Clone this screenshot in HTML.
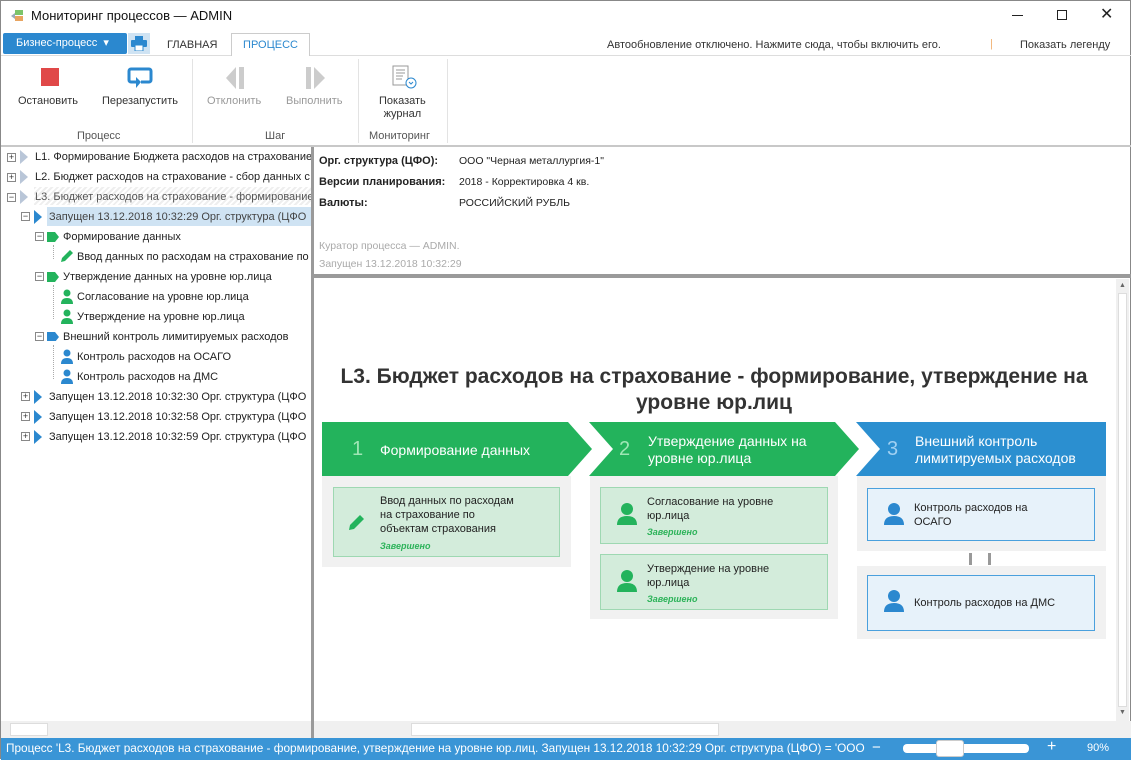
<!DOCTYPE html>
<html><head><meta charset="utf-8"><style>
*{margin:0;padding:0;box-sizing:border-box}
body{width:1131px;height:759px;overflow:hidden;background:#fff;font-family:"Liberation Sans",sans-serif;font-size:11px;color:#222;position:relative;border:1px solid #888}
.a{position:absolute;white-space:nowrap}
.rb{color:#333;font-size:11px;text-align:center}
.gray{color:#999}
.tree .a{font-size:11px;color:#222}
.pm{position:absolute;width:9px;height:9px;border:1px solid #888;background:#fff;font-size:9px;line-height:7px;text-align:center;color:#333}
.card{position:absolute;border:1px solid #9ed8b2;background:#d3ecdb}
.cardb{position:absolute;border:1px solid #4aa0dd;background:#e7f2fa}
.ct{position:absolute;font-size:11px;color:#222;line-height:14px}
.done{position:absolute;font-size:9px;font-style:italic;font-weight:bold;color:#2db35a}
.panel{position:absolute;background:#f1f1f1}
</style></head><body>
<!-- title bar -->
<svg class="a" style="left:9px;top:8px" width="16" height="14"><rect x="5" y="1" width="8" height="5" fill="#7cc46a"/><rect x="5" y="7" width="8" height="5" fill="#e8a460"/><path d="M1 7 L5 4 L5 10Z" fill="#9ab"/></svg>
<div class="a" style="left:30px;top:7px;font-size:13px;color:#111">Мониторинг процессов — ADMIN</div>
<div class="a" style="left:1011px;top:14px;width:11px;height:1px;background:#222"></div>
<div class="a" style="left:1056px;top:9px;width:10px;height:10px;border:1px solid #222"></div>
<div class="a" style="left:1099px;top:3px;font-size:16px;color:#222">✕</div>
<!-- tab row -->
<div class="a" style="left:2px;top:32px;width:124px;height:21px;background:#2b88cf;border-radius:2px;color:#fff;font-size:11px;line-height:21px;padding-left:13px">Бизнес-процесс &nbsp;▾</div>
<div class="a" style="left:127px;top:32px;width:22px;height:21px;background:#cfe3f3"></div>
<svg class="a" style="left:130px;top:35px" width="16" height="15"><rect x="4" y="0" width="8" height="4" fill="#2b88cf"/><rect x="0" y="4" width="16" height="7" rx="1" fill="#2b88cf"/><rect x="4" y="9" width="8" height="6" fill="#fff" stroke="#2b88cf"/></svg>
<div class="a" style="left:166px;top:38px;color:#333">ГЛАВНАЯ</div>
<div class="a" style="left:230px;top:32px;width:79px;height:23px;border:1px solid #ccc;border-bottom:none;background:#fff;color:#2b88cf;text-align:center;line-height:22px">ПРОЦЕСС</div>
<div class="a" style="left:0;top:54px;width:230px;height:1px;background:#ddd"></div>
<div class="a" style="left:309px;top:54px;width:822px;height:1px;background:#ddd"></div>
<div class="a" style="left:606px;top:38px;color:#333">Автообновление отключено. Нажмите сюда, чтобы включить его.</div>
<div class="a" style="left:989px;top:37px;color:#f0b070">|</div>
<div class="a" style="left:1019px;top:38px;color:#333">Показать легенду</div>
<!-- ribbon -->
<div class="a" style="left:40px;top:67px;width:18px;height:18px;background:#e04848"></div>
<svg class="a" style="left:126px;top:66px" width="28" height="22"><path d="M9 15 H4 a2 2 0 0 1-2-2 V4 a2 2 0 0 1 2-2 H22 a2 2 0 0 1 2 2 V13 a2 2 0 0 1-2 2 H14" fill="none" stroke="#2b88cf" stroke-width="3"/><path d="M9 10 L9 21 L14 15Z" fill="#2b88cf"/></svg>
<svg class="a" style="left:225px;top:66px" width="20" height="22"><path d="M10 0 L0 11 L10 22Z M13 0 H18 V22 H13Z" fill="#ccc"/></svg>
<svg class="a" style="left:305px;top:66px" width="20" height="22"><path d="M0 0 H5 V22 H0Z M8 0 L19 11 L8 22Z" fill="#ccc"/></svg>
<svg class="a" style="left:391px;top:64px" width="26" height="24"><rect x="1" y="1" width="15" height="19" fill="#fff" stroke="#999"/><path d="M4 5h9M4 8h9M4 11h7M4 14h6" stroke="#999"/><circle cx="19" cy="18" r="5" fill="#fff" stroke="#2b88cf"/><path d="M17 17l2 2 2-2" stroke="#2b88cf" fill="none"/></svg>
<div class="a rb" style="left:17px;top:94px">Остановить</div>
<div class="a rb" style="left:101px;top:94px">Перезапустить</div>
<div class="a rb gray" style="left:206px;top:94px">Отклонить</div>
<div class="a rb gray" style="left:285px;top:94px">Выполнить</div>
<div class="a rb" style="left:378px;top:94px;line-height:13px">Показать<br>журнал</div>
<div class="a" style="left:76px;top:129px;color:#555">Процесс</div>
<div class="a" style="left:264px;top:129px;color:#555">Шаг</div>
<div class="a" style="left:368px;top:129px;color:#555">Мониторинг</div>
<div class="a" style="left:191px;top:58px;width:1px;height:84px;background:#e3e3e3"></div>
<div class="a" style="left:357px;top:58px;width:1px;height:84px;background:#e3e3e3"></div>
<div class="a" style="left:446px;top:58px;width:1px;height:84px;background:#e3e3e3"></div>
<div class="a" style="left:0;top:144px;width:1131px;height:2px;background:#c8c8c8"></div>
<!-- tree -->
<div class="tree">
<div class="a" style="left:33px;top:186px;width:277px;height:18px;background:repeating-linear-gradient(135deg,#eee 0 2px,#fff 2px 4px)"></div>
<div class="a" style="left:46px;top:206px;width:264px;height:19px;background:#cfe3f3"></div>
<div class="pm" style="left:6px;top:152px">+</div><div class="pm" style="left:6px;top:172px">+</div><div class="pm" style="left:6px;top:192px">−</div>
<div class="pm" style="left:20px;top:211px">−</div><div class="pm" style="left:34px;top:231px">−</div><div class="pm" style="left:34px;top:271px">−</div><div class="pm" style="left:34px;top:331px">−</div>
<div class="pm" style="left:20px;top:391px">+</div><div class="pm" style="left:20px;top:411px">+</div><div class="pm" style="left:20px;top:431px">+</div>
<svg class="a" style="left:19px;top:149px" width="30" height="300">
<path d="M0 0 L8 7 L0 14Z" fill="#b9c6d8"/><path d="M0 20 L8 27 L0 34Z" fill="#b9c6d8"/><path d="M0 40 L8 47 L0 54Z" fill="#b9c6d8"/>
<path d="M14 60 L22 67 L14 74Z" fill="#2b88cf"/><path d="M14 240 L22 247 L14 254Z" fill="#2b88cf"/><path d="M14 260 L22 267 L14 274Z" fill="#2b88cf"/><path d="M14 280 L22 287 L14 294Z" fill="#2b88cf"/>
</svg>
<svg class="a" style="left:44px;top:230px" width="20" height="110"><path d="M2 1h8l4 5-4 5H2z" fill="#23b35c"/><path d="M2 41h8l4 5-4 5H2z" fill="#23b35c"/><path d="M2 101h8l4 5-4 5H2z" fill="#2b88cf"/></svg>
<div class="a" style="left:52px;top:244px;width:1px;height:14px;border-left:1px dotted #aaa"></div>
<div class="a" style="left:52px;top:284px;width:1px;height:34px;border-left:1px dotted #aaa"></div>
<div class="a" style="left:52px;top:344px;width:1px;height:34px;border-left:1px dotted #aaa"></div>
<svg class="a" style="left:58px;top:247px" width="16" height="140">
<path d="M2 14 L3 10 L11 2 L14 5 L6 13Z" fill="#23b35c"/>
<g fill="#23b35c"><circle cx="8" cy="45" r="3.5"/><path d="M2 56 q0-6 6-6 q6 0 6 6z"/><circle cx="8" cy="65" r="3.5"/><path d="M2 76 q0-6 6-6 q6 0 6 6z"/></g>
<g fill="#2b88cf"><circle cx="8" cy="105" r="3.5"/><path d="M2 116 q0-6 6-6 q6 0 6 6z"/><circle cx="8" cy="125" r="3.5"/><path d="M2 136 q0-6 6-6 q6 0 6 6z"/></g>
</svg>
<div class="a" style="left:34px;top:150px">L1. Формирование Бюджета расходов на страхование</div>
<div class="a" style="left:34px;top:170px">L2. Бюджет расходов на страхование - сбор данных с</div>
<div class="a" style="left:34px;top:190px;color:#555">L3. Бюджет расходов на страхование - формирование</div>
<div class="a" style="left:48px;top:210px;color:#444">Запущен 13.12.2018 10:32:29 Орг. структура (ЦФО</div>
<div class="a" style="left:62px;top:230px">Формирование данных</div>
<div class="a" style="left:76px;top:250px">Ввод данных по расходам на страхование по</div>
<div class="a" style="left:62px;top:270px">Утверждение данных на уровне юр.лица</div>
<div class="a" style="left:76px;top:290px">Согласование на уровне юр.лица</div>
<div class="a" style="left:76px;top:310px">Утверждение на уровне юр.лица</div>
<div class="a" style="left:62px;top:330px">Внешний контроль лимитируемых расходов</div>
<div class="a" style="left:76px;top:350px">Контроль расходов на ОСАГО</div>
<div class="a" style="left:76px;top:370px">Контроль расходов на ДМС</div>
<div class="a" style="left:48px;top:390px">Запущен 13.12.2018 10:32:30 Орг. структура (ЦФО</div>
<div class="a" style="left:48px;top:410px">Запущен 13.12.2018 10:32:58 Орг. структура (ЦФО</div>
<div class="a" style="left:48px;top:430px">Запущен 13.12.2018 10:32:59 Орг. структура (ЦФО</div>
</div>
<div class="a" style="left:310px;top:146px;width:3px;height:592px;background:#9a9a9a"></div>
<!-- info -->
<div class="a" style="left:318px;top:154px;font-weight:bold;font-size:11px">Орг. структура (ЦФО):</div>
<div class="a" style="left:458px;top:154px;font-size:10.5px">ООО "Черная металлургия-1"</div>
<div class="a" style="left:318px;top:175px;font-weight:bold;font-size:11px">Версии планирования:</div>
<div class="a" style="left:458px;top:175px;font-size:10.5px">2018 - Корректировка 4 кв.</div>
<div class="a" style="left:318px;top:196px;font-weight:bold;font-size:11px">Валюты:</div>
<div class="a" style="left:458px;top:196px;font-size:10.5px">РОССИЙСКИЙ РУБЛЬ</div>
<div class="a" style="left:318px;top:239px;font-size:10.5px;color:#aaa">Куратор процесса — ADMIN.</div>
<div class="a" style="left:318px;top:257px;font-size:10.5px;color:#aaa">Запущен 13.12.2018 10:32:29</div>
<div class="a" style="left:313px;top:273px;width:818px;height:4px;background:#9a9a9a"></div>
<!-- diagram -->
<div class="a" style="left:313px;top:363px;width:800px;text-align:center;font-size:21px;font-weight:bold;color:#333;line-height:26px;white-space:normal">L3. Бюджет расходов на страхование - формирование, утверждение на<br>уровне юр.лиц</div>
<svg class="a" style="left:321px;top:421px" width="785" height="55">
<path d="M0 0 H246 L270 27 L246 54 H0Z" fill="#23b35c"/>
<path d="M267 0 H513 L537 27 L513 54 H267 L291 27Z" fill="#23b35c"/>
<path d="M534 0 H784 V54 H534 L558 27Z" fill="#2b8fd0"/>
</svg>
<div class="a" style="left:351px;top:437px;font-size:20px;color:#9fe6b5">1</div>
<div class="a" style="left:379px;top:441px;font-size:14px;color:#fff">Формирование данных</div>
<div class="a" style="left:618px;top:437px;font-size:20px;color:#9fe6b5">2</div>
<div class="a" style="left:647px;top:432px;font-size:14px;color:#fff;line-height:17px">Утверждение данных на<br>уровне юр.лица</div>
<div class="a" style="left:886px;top:437px;font-size:20px;color:#9fd0f2">3</div>
<div class="a" style="left:914px;top:432px;font-size:14px;color:#fff;line-height:17px">Внешний контроль<br>лимитируемых расходов</div>
<div class="panel" style="left:321px;top:475px;width:249px;height:91px"></div>
<div class="panel" style="left:589px;top:475px;width:248px;height:143px"></div>
<div class="panel" style="left:856px;top:475px;width:249px;height:75px"></div>
<div class="panel" style="left:856px;top:565px;width:249px;height:73px"></div>
<div class="a" style="left:968px;top:552px;width:3px;height:12px;background:#999"></div>
<div class="a" style="left:987px;top:552px;width:3px;height:12px;background:#999"></div>
<div class="card" style="left:332px;top:486px;width:227px;height:70px"></div>
<svg class="a" style="left:346px;top:511px" width="20" height="20"><path d="M2 18 L3 13 L13 3 L17 7 L7 17Z" fill="#23b35c"/></svg>
<div class="ct" style="left:379px;top:493px">Ввод данных по расходам<br>на страхование по<br>объектам страхования</div>
<div class="done" style="left:379px;top:540px">Завершено</div>
<div class="card" style="left:599px;top:486px;width:228px;height:57px"></div>
<div class="ct" style="left:646px;top:494px">Согласование на уровне<br>юр.лица</div>
<div class="done" style="left:646px;top:526px">Завершено</div>
<div class="card" style="left:599px;top:553px;width:228px;height:56px"></div>
<div class="ct" style="left:646px;top:561px">Утверждение на уровне<br>юр.лица</div>
<div class="done" style="left:646px;top:593px">Завершено</div>
<div class="cardb" style="left:866px;top:487px;width:228px;height:53px"></div>
<div class="ct" style="left:913px;top:500px">Контроль расходов на<br>ОСАГО</div>
<div class="cardb" style="left:866px;top:574px;width:228px;height:56px"></div>
<div class="ct" style="left:913px;top:595px">Контроль расходов на ДМС</div>
<svg class="a" style="left:615px;top:500px" width="22" height="100"><g fill="#23b35c"><circle cx="11" cy="8" r="6"/><path d="M1 24 q0-9 10-9 q10 0 10 9z"/><circle cx="11" cy="75" r="6"/><path d="M1 91 q0-9 10-9 q10 0 10 9z"/></g></svg>
<svg class="a" style="left:882px;top:500px" width="22" height="115"><g fill="#2b88cf"><circle cx="11" cy="8" r="6"/><path d="M1 24 q0-9 10-9 q10 0 10 9z"/><circle cx="11" cy="95" r="6"/><path d="M1 111 q0-9 10-9 q10 0 10 9z"/></g></svg>
<!-- scrollbars -->
<div class="a" style="left:1115px;top:278px;width:13px;height:442px;background:#f0f0f0"></div>
<div class="a" style="left:1117px;top:292px;width:9px;height:414px;background:#fff;border:1px solid #ddd"></div>
<div class="a" style="left:1118px;top:281px;font-size:7px;color:#666">▲</div>
<div class="a" style="left:1118px;top:708px;font-size:7px;color:#666">▼</div>
<div class="a" style="left:0;top:720px;width:310px;height:17px;background:#f0f0f0"></div>
<div class="a" style="left:9px;top:722px;width:38px;height:13px;background:#fff;border:1px solid #ddd"></div>
<div class="a" style="left:313px;top:720px;width:818px;height:17px;background:#f0f0f0"></div>
<div class="a" style="left:410px;top:722px;width:308px;height:13px;background:#fff;border:1px solid #ddd"></div>
<!-- status -->
<div class="a" style="left:0;top:737px;width:1131px;height:22px;background:#3a95d6"></div>
<div class="a" style="left:5px;top:740px;color:#fff;font-size:11.8px">Процесс 'L3. Бюджет расходов на страхование - формирование, утверждение на уровне юр.лиц. Запущен 13.12.2018 10:32:29 Орг. структура (ЦФО) = 'ООО</div>
<div class="a" style="left:871px;top:738px;color:#fff;font-size:15px">−</div>
<div class="a" style="left:902px;top:743px;width:126px;height:9px;background:#fff;border-radius:4px"></div>
<div class="a" style="left:935px;top:739px;width:28px;height:17px;background:#fff;border:1px solid #ccc;border-radius:3px"></div>
<div class="a" style="left:1046px;top:737px;color:#fff;font-size:16px">+</div>
<div class="a" style="left:1086px;top:741px;color:#fff;font-size:11px">90%</div>
</body></html>
